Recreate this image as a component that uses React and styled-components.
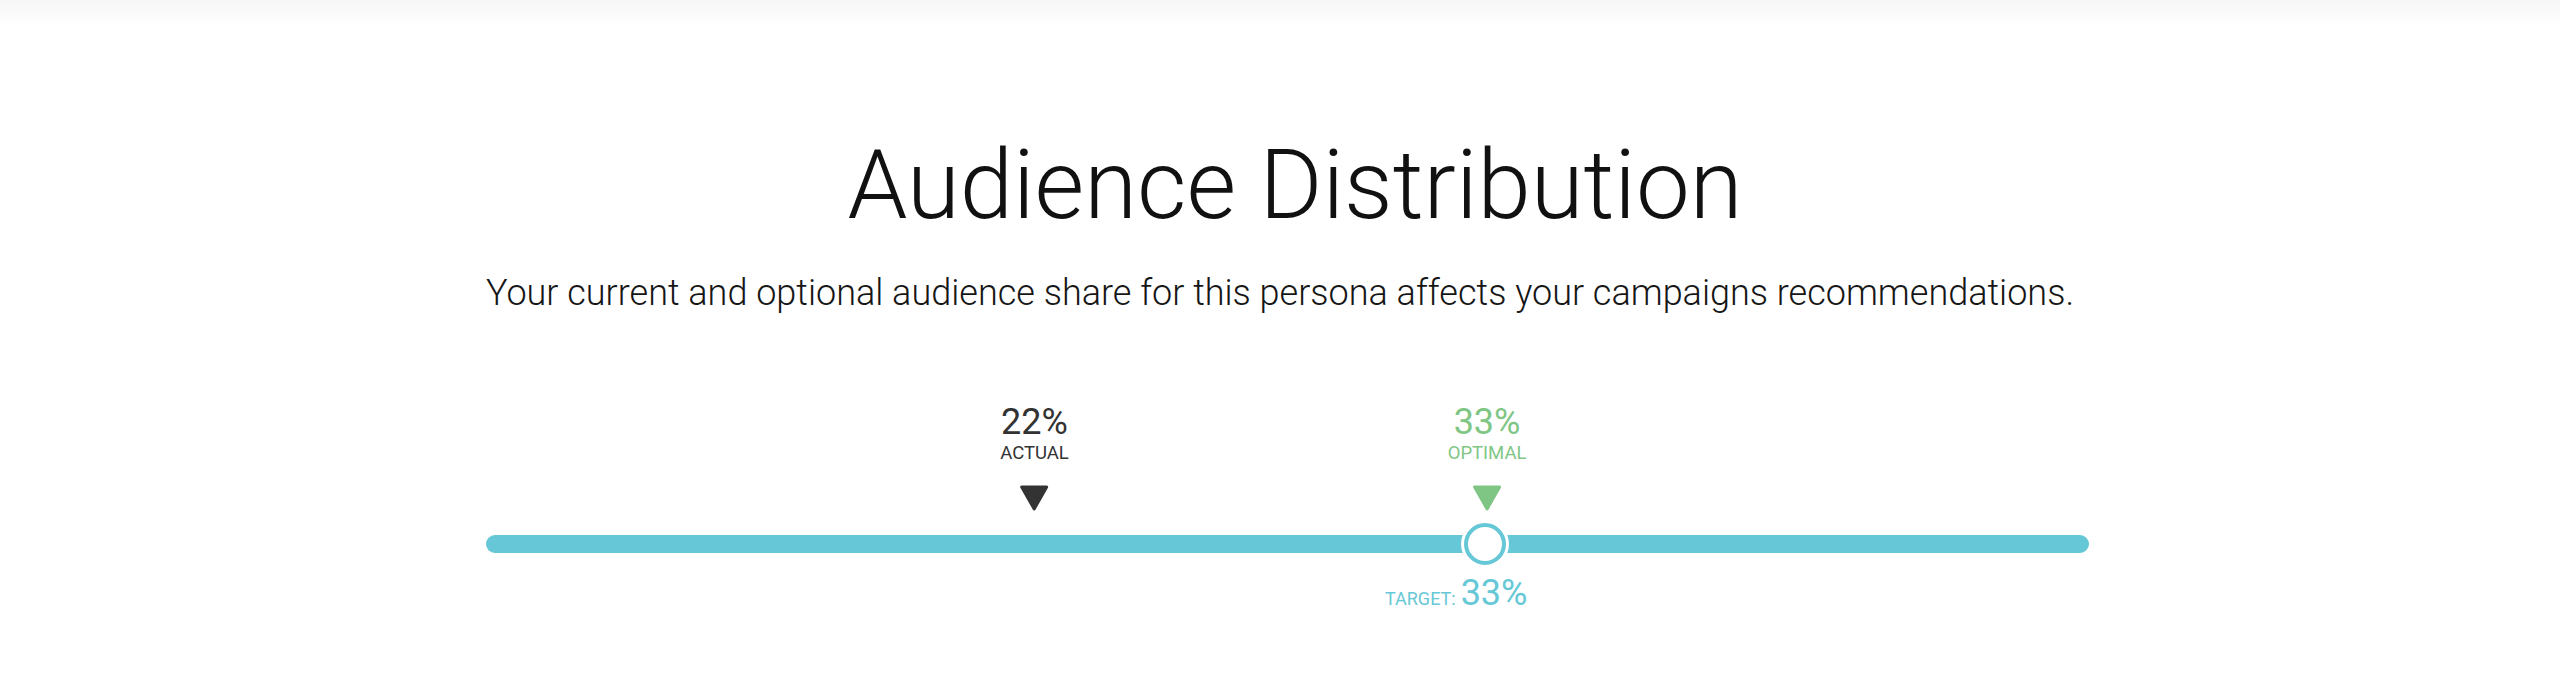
import React from "react";
import styled, { createGlobalStyle } from "styled-components";

const CYAN = "#66c8d6";
const GREEN = "#7fc685";
const DARK = "#333333";

const GlobalStyle = createGlobalStyle`
  html, body {
    margin: 0;
    padding: 0;
    background: #fff;
  }
  body {
    font-family: Roboto, "Liberation Sans", Arial, sans-serif;
    -webkit-font-smoothing: antialiased;
  }
`;

const markers = [
  { value: "22%", label: "ACTUAL", pos: 34.22, color: DARK },
  { value: "33%", label: "OPTIMAL", pos: 62.45, color: GREEN },
];

const target = { value: "33%", pos: 62.32 };

export default function App() {
  return (
    <>
      <GlobalStyle />
      <Page>
        <TopShade />
        <Section>
          <Title>Audience Distribution</Title>
          <Subtitle>
            Your current and optional audience share for this persona affects
            your campaigns recommendations.
          </Subtitle>

          <Scale>
            <MarkerRow>
              {markers.map((m) => (
                <Marker key={m.label} style={{ left: `${m.pos}%` }} color={m.color}>
                  <MarkerValue>{m.value}</MarkerValue>
                  <MarkerLabel>{m.label}</MarkerLabel>
                  <Pointer viewBox="0 0 29 26" width="29" height="26">
                    <polygon
                      points="2,2 27,2 14.5,24"
                      fill={m.color}
                      stroke={m.color}
                      strokeWidth="3"
                      strokeLinejoin="round"
                    />
                  </Pointer>
                </Marker>
              ))}
            </MarkerRow>

            <Track>
              <Thumb style={{ left: `${target.pos}%` }} />
              <TargetLabel style={{ left: `calc(${target.pos}% - 100px)` }}>
                <small>TARGET:</small>
                <span>{target.value}</span>
              </TargetLabel>
            </Track>
          </Scale>
        </Section>
      </Page>
    </>
  );
}

const Page = styled.div`
  min-height: 699px;
  background: #fff;
`;

const TopShade = styled.div`
  height: 28px;
  background: linear-gradient(to bottom, #f7f7f7, #ffffff);
`;

const Section = styled.section`
  display: flex;
  flex-direction: column;
  align-items: center;
  padding-top: 109px;
`;

const Title = styled.h1`
  margin: 0 0 0 30px;
  font-size: 96px;
  line-height: 1;
  font-weight: 300;
  color: #111;
`;

const Subtitle = styled.p`
  margin: 42px 0 0;
  font-size: 36px;
  line-height: 1;
  font-weight: 300;
  color: #161616;
`;

const Scale = styled.div`
  align-self: flex-start;
  margin-left: calc(50% - 794px);
  width: 1603px;
  margin-top: 93px;
`;

const MarkerRow = styled.div`
  position: relative;
  height: 131px;
`;

const Marker = styled.div`
  position: absolute;
  top: 0;
  transform: translateX(-50%);
  display: flex;
  flex-direction: column;
  align-items: center;
  color: ${(p) => p.color};
`;

const MarkerValue = styled.div`
  font-size: 36px;
  line-height: 36px;
  font-weight: 400;
`;

const MarkerLabel = styled.div`
  margin-top: 4px;
  font-size: 18.5px;
  line-height: 19px;
  font-weight: 400;
`;

const Pointer = styled.svg`
  display: block;
  margin-top: 22px;
`;

const Track = styled.div`
  position: relative;
  height: 18px;
  border-radius: 9px;
  background: ${CYAN};
`;

const Thumb = styled.div`
  position: absolute;
  top: 50%;
  width: 42px;
  height: 42px;
  box-sizing: border-box;
  border-radius: 50%;
  border: 4px solid ${CYAN};
  background: #fff;
  box-shadow: 0 0 0 3px #fff;
  transform: translate(-50%, -50%);
`;

const TargetLabel = styled.div`
  position: absolute;
  top: 40px;
  display: flex;
  align-items: baseline;
  gap: 5px;
  color: ${CYAN};
  white-space: nowrap;

  small {
    font-size: 18px;
    line-height: 1;
  }

  span {
    font-size: 36px;
    line-height: 1;
  }
`;
